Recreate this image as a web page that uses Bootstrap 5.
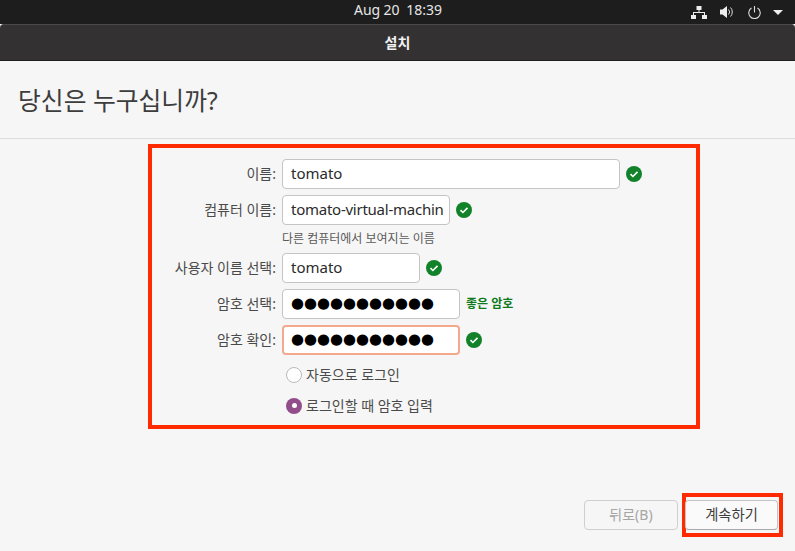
<!DOCTYPE html>
<html lang="ko">
<head>
<meta charset="utf-8">
<title>설치</title>
<link rel="stylesheet" href="https://cdn.jsdelivr.net/npm/bootstrap@5.3.0/dist/css/bootstrap.min.css">
<style>
html,body{height:551px;overflow:hidden}
body{background:#f6f6f6;font-family:"Noto Sans","Noto Sans CJK KR",sans-serif;color:#3d3d3d;font-size:14px}
.screen{width:795px;height:551px}
.topbar{height:24px;background:#1d1d1d;color:#e6e6e6;font-size:14px;padding-right:12px}
.clock{left:354px;top:0;white-space:pre;line-height:20px;word-spacing:-.3px}
.titlebar{height:37px;background:#333131;border-top:1px solid #4a4848;border-bottom:1px solid #1f1f1f;color:#f2f2f2;font-weight:700;font-size:14px;border-radius:4px 4px 0 0}
.pagehead{height:78px;padding:3px 0 0 18px;border-bottom:1px solid #dcdcdc;font-size:24.8px;color:#3d3d3d;font-weight:400}
.redbox{margin:5px 0 0 148px;width:552px;height:285px;border:4px solid #ff2a00;padding:11px 0 0 0}
.fgrid{display:grid;grid-template-columns:124px 1fr;column-gap:6px;row-gap:6px;align-items:center}
.flabel{text-align:right;color:#4a4a4a;font-size:14px;margin-top:-1px}
.finput{height:30px;background:#fff;border:1px solid #c4c4c4;border-radius:4px;padding:0 8px;font-size:15px;color:#2b2b2b;line-height:27px;overflow:hidden;white-space:nowrap}
.tight{letter-spacing:-.25px}
.w338{width:338px}.w168{width:168px}.w138{width:138px}.w178{width:178px}
.focused{border:2px solid #f4a98f;line-height:25px;padding:0 7px}
.dots{font-family:"DejaVu Sans",sans-serif;font-size:14.9px;color:#000}
.okicon{width:16px;height:16px;flex:none}
.inrow{gap:6px}
.hint{font-size:12px;color:#5a5a5a;height:16px;line-height:16px}
.strength{font-size:12px;font-weight:700;color:#0e7a20}
.radiobox{margin-top:-2px}
.radioline{height:31px;padding-left:4px;font-size:14px;color:#4a4a4a}
.radiodot{width:16px;height:16px;border-radius:50%;background:#fff;border:1px solid #b9b9b9;flex:none}
.radiodot.on{background:#924d8b;border:0}
.radiodot.on::after{content:"";width:5px;height:5px;border-radius:50%;background:#fff}
.actions{padding:71px 12px 0 0;align-items:flex-start}
.ghbtn{width:94px;height:30px;background:#f6f6f6;border:1px solid #cfcfcf;border-radius:4px;font-size:14px;line-height:28px;text-align:center;padding:0}
.ghbtn.off{color:#a5a5a5;background:#f6f6f6}
.ghbtn.go{background:#fafafa;color:#3d3d3d;border-color:#c4c4c4;border-bottom-color:#aaa;width:93px;margin-left:-1px;font-size:14.3px}
.gowrap{border:4px solid #ff2a00;margin:-7px 0 0 4px;padding:3px 0 0 0;width:101px;height:44px;display:flex;justify-content:flex-start}
.ic-net{margin-right:13px}.ic-vol{margin-right:14px}.ic-pow{margin-right:12px}
</style>
</head>
<body>
<div class="screen d-flex flex-column">
  <div class="topbar d-flex align-items-center justify-content-end position-relative">
    <span class="clock position-absolute">Aug 20  18:39</span>
    <svg width="16" height="13" viewBox="0 0 16 13" class="ic-net" fill="#eee"><rect x="5.500" y="0" width="5" height="4"/><rect x="0" y="9" width="5" height="4"/><rect x="11" y="9" width="5" height="4"/><path d="M7.500 4h1v2h5.500v3h-1V7H3v2H2V6h5.500z"/></svg>
    <svg width="14" height="12" viewBox="0 0 14 12" class="ic-vol" fill="#eee"><path d="M0 3.500h2.500L7 0v12L2.500 8.500H0z"/><path d="M8.500 3.500a3.500 3.500 0 0 1 0 5M10.500 1.500a6.500 6.500 0 0 1 0 9" fill="none" stroke="#ddd" stroke-width="1"/></svg>
    <svg width="13" height="13" viewBox="0 0 13 13" class="ic-pow" fill="none" stroke="#ddd" stroke-width="1.100"><path d="M3.500 2a5.700 5.700 0 1 0 6 0"/><path d="M6.500 0v6.500"/></svg>
    <svg width="10" height="5" viewBox="0 0 10 5" fill="#eee"><path d="M0 0h10L5 5z"/></svg>
  </div>
  <div class="titlebar d-flex align-items-center justify-content-center">설치</div>
  <div class="pagehead d-flex align-items-center">당신은 누구십니까?</div>
  <form class="redbox">
    <div class="fgrid">
      <div class="flabel">이름:</div>
      <div class="d-flex align-items-center inrow"><div class="finput w338">tomato</div><svg class="okicon" viewBox="0 0 16 16"><circle cx="8" cy="8" r="8" fill="#12822a"/><path d="M4.500 8.200l2.400 2.300 4.600-4.600" fill="none" stroke="#fff" stroke-width="1.600"/></svg></div>
      <div class="flabel">컴퓨터 이름:</div>
      <div class="d-flex align-items-center inrow"><div class="finput w168 tight">tomato-virtual-machin</div><svg class="okicon" viewBox="0 0 16 16"><circle cx="8" cy="8" r="8" fill="#12822a"/><path d="M4.500 8.200l2.400 2.300 4.600-4.600" fill="none" stroke="#fff" stroke-width="1.600"/></svg></div>
      <div></div>
      <div class="hint">다른 컴퓨터에서 보여지는 이름</div>
      <div class="flabel">사용자 이름 선택:</div>
      <div class="d-flex align-items-center inrow"><div class="finput w138">tomato</div><svg class="okicon" viewBox="0 0 16 16"><circle cx="8" cy="8" r="8" fill="#12822a"/><path d="M4.500 8.200l2.400 2.300 4.600-4.600" fill="none" stroke="#fff" stroke-width="1.600"/></svg></div>
      <div class="flabel">암호 선택:</div>
      <div class="d-flex align-items-center inrow"><div class="finput w178 dots">●●●●●●●●●●●</div><span class="strength">좋은 암호</span></div>
      <div class="flabel">암호 확인:</div>
      <div class="d-flex align-items-center inrow"><div class="finput w178 dots focused">●●●●●●●●●●●</div><svg class="okicon" viewBox="0 0 16 16"><circle cx="8" cy="8" r="8" fill="#12822a"/><path d="M4.500 8.200l2.400 2.300 4.600-4.600" fill="none" stroke="#fff" stroke-width="1.600"/></svg></div>
      <div></div>
      <div class="radiobox">
        <div class="radioline d-flex align-items-center gap-1"><span class="radiodot"></span>자동으로 로그인</div>
        <div class="radioline d-flex align-items-center gap-1"><span class="radiodot on d-flex align-items-center justify-content-center"></span>로그인할 때 암호 입력</div>
      </div>
    </div>
  </form>
  <div class="actions d-flex justify-content-end">
    <button type="button" class="ghbtn off" disabled>뒤로(B)</button>
    <div class="gowrap"><button type="button" class="ghbtn go">계속하기</button></div>
  </div>
</div>
</body>
</html>
